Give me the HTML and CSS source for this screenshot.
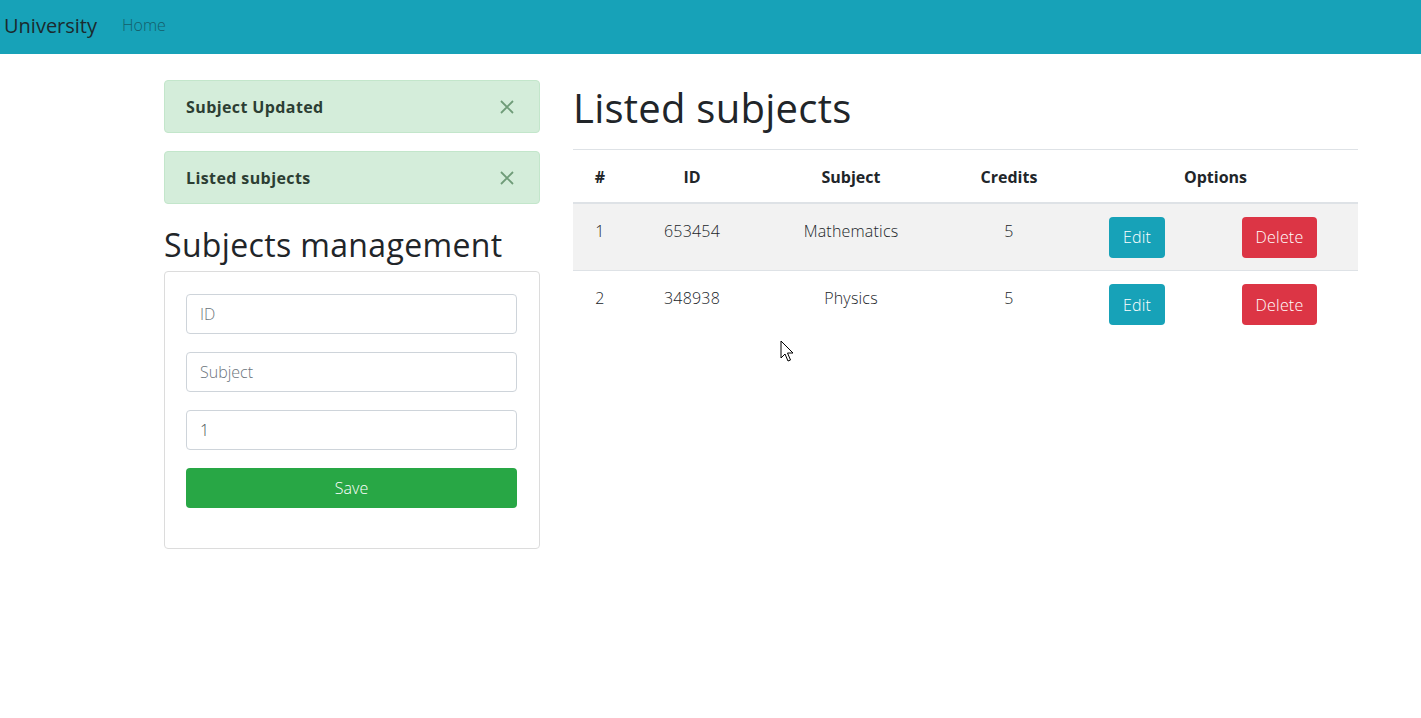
FILE: index.html
```html
<!DOCTYPE html>
<html lang="en">
<head>
<meta charset="utf-8">
<title>University</title>
<link rel="stylesheet" href="styles.css">
</head>
<body>
<nav class="navbar">
  <span class="brand">University</span>
  <a class="nav-link">Home</a>
</nav>
<main class="page">
  <section class="left">
    <div class="alert">
      <span>Subject Updated</span>
      <svg class="close" width="14" height="14" viewBox="0 0 14 14"><path d="M1 1L13 13M13 1L1 13" stroke="currentColor" stroke-width="1.8" fill="none"/></svg>
    </div>
    <div class="alert">
      <span>Listed subjects</span>
      <svg class="close" width="14" height="14" viewBox="0 0 14 14"><path d="M1 1L13 13M13 1L1 13" stroke="currentColor" stroke-width="1.8" fill="none"/></svg>
    </div>
    <h2 class="title2">Subjects management</h2>
    <div class="card">
      <div class="field placeholder">ID</div>
      <div class="field placeholder">Subject</div>
      <div class="field">1</div>
      <div class="btn btn-save">Save</div>
    </div>
  </section>
  <section class="right">
    <h1 class="title1">Listed subjects</h1>
    <table class="table">
      <colgroup>
        <col style="width:54px"><col style="width:130px"><col style="width:188px"><col style="width:128px"><col style="width:128px"><col style="width:157px">
      </colgroup>
      <thead>
        <tr><th>#</th><th>ID</th><th>Subject</th><th>Credits</th><th colspan="2">Options</th></tr>
      </thead>
      <tbody>
        <tr class="odd"><td>1</td><td>653454</td><td>Mathematics</td><td>5</td><td><span class="btn btn-edit">Edit</span></td><td><span class="btn btn-delete">Delete</span></td></tr>
        <tr><td>2</td><td>348938</td><td>Physics</td><td>5</td><td><span class="btn btn-edit">Edit</span></td><td><span class="btn btn-delete">Delete</span></td></tr>
      </tbody>
    </table>
  </section>
</main>
<svg class="cursor" width="16" height="24" viewBox="0 0 16 24"><path d="M1 1V18L5 14L8 21L10.5 20L7.5 13H13Z" fill="#fff" stroke="#000" stroke-width="1" stroke-linejoin="round"/></svg>
</body>
</html>
```
FILE: styles.css
```css
* { box-sizing: border-box; }
body {
  margin: 0;
  font-family: "Open Sans", "Noto Sans", sans-serif;
  font-weight: 300;
  font-size: 16px;
  color: #212529;
  background: #fff;
}
.navbar {
  height: 54px;
  background: #17a2b8;
  display: flex;
  align-items: center;
  padding: 0 0 4px 4px;
}
.brand {
  font-size: 20px;
  font-weight: 400;
  color: #1b2a2e;
  margin-right: 25px;
}
.nav-link {
  font-size: 16px;
  color: #145e6a;
  font-weight: 300;
}
.page {
  display: flex;
  gap: 33px;
  padding: 26px 0 0 164px;
}
.left { width: 376px; }
.right { width: 785px; }
.alert {
  height: 53px;
  background: #d4edda;
  border: 1px solid #c3e6cb;
  border-radius: 4px;
  display: flex;
  align-items: center;
  justify-content: space-between;
  padding: 1px 25px 0 21px;
  margin-bottom: 18px;
  font-weight: 700;
  font-size: 16px;
  letter-spacing: 0.4px;
  color: #2c3e33;
}
.alert .close { color: #6f9c78; }
.title2 {
  margin: 22px 0 7px;
  font-size: 32px;
  font-weight: 400;
  line-height: 1.2;
  letter-spacing: 0.35px;
}
.card {
  border: 1px solid #dcdcdc;
  border-radius: 4px;
  padding: 22px 22px 40px 21px;
  display: flex;
  flex-direction: column;
  gap: 18px;
}
.field {
  height: 40px;
  border: 1px solid #ced4da;
  border-radius: 4px;
  padding: 0 13px;
  display: flex;
  align-items: center;
  font-size: 16px;
  color: #495057;
}
.field.placeholder { color: #6c757d; }
.btn {
  display: inline-flex;
  align-items: center;
  justify-content: center;
  height: 41px;
  border-radius: 4px;
  color: #fff;
  font-size: 16px;
  font-weight: 300;
}
.btn-save { background: #28a745; height: 40px; }
.btn-edit { background: #17a2b8; width: 56px; }
.btn-delete { background: #dc3545; width: 75px; }
.title1 {
  margin: 4px 0 17px;
  font-size: 40px;
  font-weight: 400;
  line-height: 1.2;
  letter-spacing: 0.25px;
}
.table {
  width: 785px;
  border-collapse: collapse;
  table-layout: fixed;
}
.table th {
  height: 53px;
  font-weight: 700;
  font-size: 16px;
  text-align: center;
  border-top: 1px solid #dee2e6;
  border-bottom: 2px solid #dee2e6;
  padding: 2px 0 0;
}
.table td {
  height: 68px;
  text-align: center;
  vertical-align: top;
  padding: 16px 0 0;
  border-top: 1px solid #dee2e6;
  letter-spacing: 0.2px;
}
.table td:nth-child(5), .table td:nth-child(6) { padding-top: 13px; }
.table tr.odd td { background: #f2f2f2; }
.cursor {
  position: absolute;
  left: 780px;
  top: 340px;
}
```
